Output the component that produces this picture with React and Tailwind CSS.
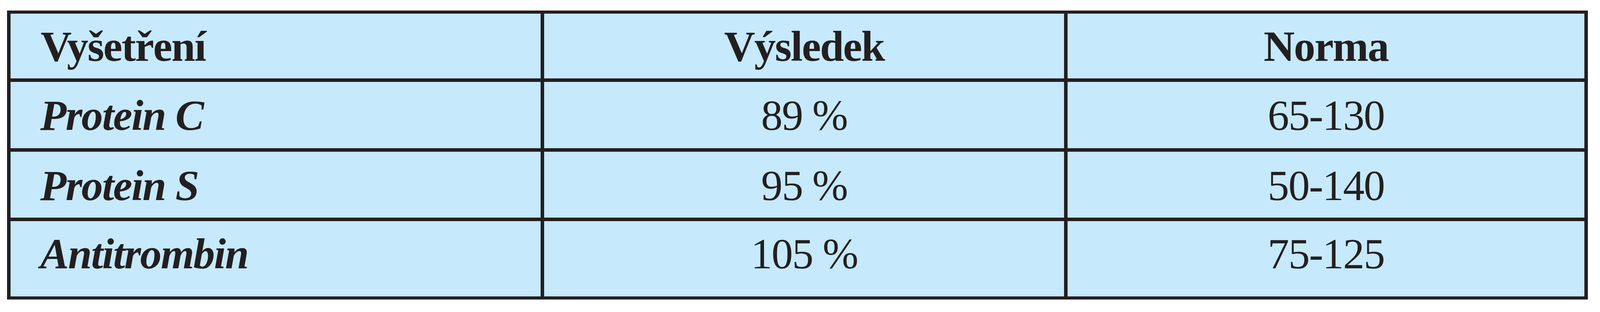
const rows = [
  { name: 'Protein C', result: '89 %', norm: '65-130', h: 'h-[170px]', pt: 'pt-[31px]' },
  { name: 'Protein S', result: '95 %', norm: '50-140', h: 'h-[169px]', pt: 'pt-[32px]' },
  { name: 'Antitrombin', result: '105 %', norm: '75-125', h: 'h-[193px]', pt: 'pt-[29px]' },
];

const App = () => {
  return (
    <div className="w-full h-[800px] overflow-hidden bg-white pl-[18px] pr-[31px] pt-[27px]">
      {/* Lab results table */}
      <div
        className="w-full border-x-[9px] border-y-[8px] border-[#231f20] bg-[#231f20] text-[#231f20] text-[110px] leading-none tracking-[-0.02em]"
        style={{ fontFamily: '"Liberation Serif", "Times New Roman", serif' }}
      >
        <div className="grid grid-cols-[1573fr_1542fr_1533fr] gap-[9px]">
          {/* Header */}
          <div className="h-[166px] bg-[#c6e9fb] pl-[77px] pt-[29px] font-bold">Vyšetření</div>
          <div className="h-[166px] bg-[#c6e9fb] pt-[29px] text-center font-bold">Výsledek</div>
          <div className="h-[166px] bg-[#c6e9fb] pt-[29px] text-center font-bold">Norma</div>

          {rows.map((row) => (
            <div key={row.name} className="contents">
              <div className={`${row.h} ${row.pt} bg-[#c6e9fb] pl-[76px] font-bold italic`}>{row.name}</div>
              <div className={`${row.h} ${row.pt} bg-[#c6e9fb] text-center`}>{row.result}</div>
              <div className={`${row.h} ${row.pt} bg-[#c6e9fb] text-center`}>{row.norm}</div>
            </div>
          ))}
        </div>
      </div>
    </div>
  );
};

export default App;
